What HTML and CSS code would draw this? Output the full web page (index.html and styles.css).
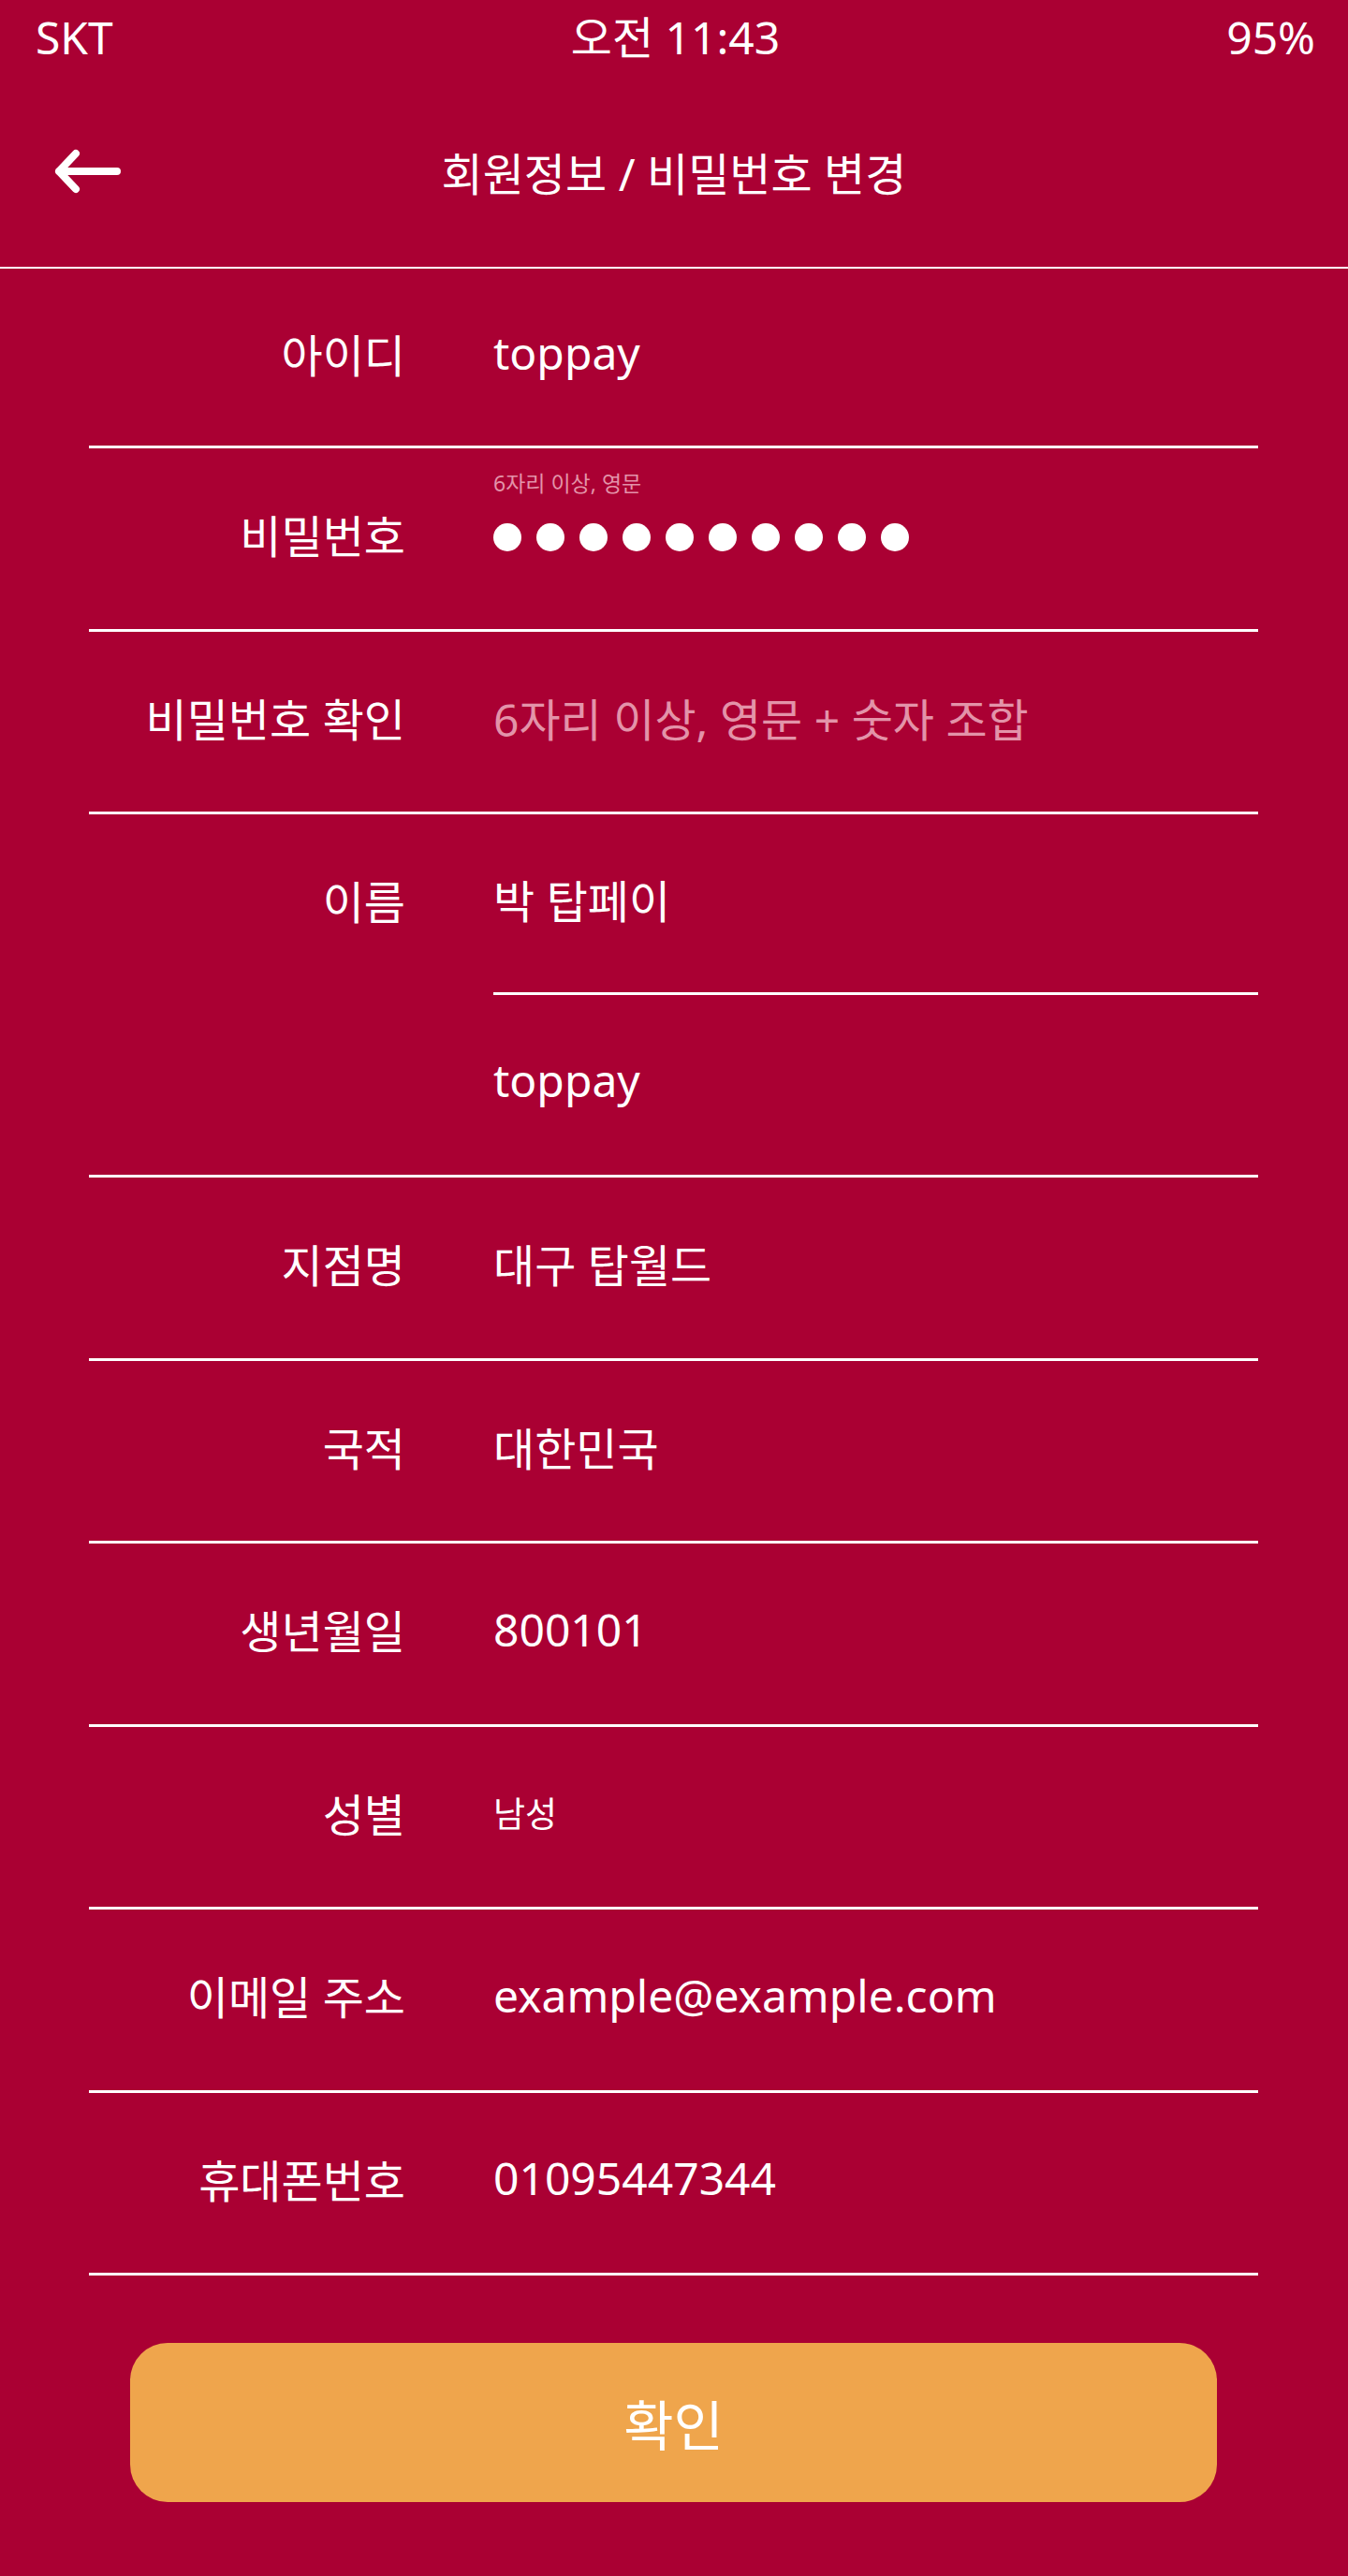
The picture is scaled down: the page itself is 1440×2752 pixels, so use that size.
FILE: index.html
```html
<!DOCTYPE html>
<html lang="ko">
<head>
  <meta charset="UTF-8">
  <title>회원정보 / 비밀번호 변경</title>
  <link rel="stylesheet" href="styles.css">
</head>
<body>
  <div class="status-bar">
    <span>SKT</span>
    <span class="clock">오전 11:43</span>
    <span class="battery">95%</span>
  </div>

  <header class="top-nav">
    <button class="back-btn" title="뒤로">
      <svg width="80" height="52" viewBox="0 0 80 52">
        <path d="M70 26 H8 M26 7 L8 26 L26 45" fill="none" stroke="#fff" stroke-width="8" stroke-linecap="round" stroke-linejoin="round"/>
      </svg>
    </button>
    <h1>회원정보 / 비밀번호 변경</h1>
    <div></div>
  </header>

  <main class="form">
    <div class="field">
      <div class="field-label">아이디</div>
      <div class="field-value">toppay</div>
    </div>

    <div class="field">
      <div class="field-label">비밀번호</div>
      <div class="field-value pw">
        <div class="pw-hint">6자리 이상, 영문</div>
        <div class="dots">
          <i></i><i></i><i></i><i></i><i></i><i></i><i></i><i></i><i></i><i></i>
        </div>
      </div>
    </div>

    <div class="field">
      <div class="field-label">비밀번호 확인</div>
      <div class="field-value placeholder">6자리 이상, 영문 + 숫자 조합</div>
    </div>

    <div class="field">
      <div class="field-label">이름</div>
      <div class="field-stack">
        <div class="field-value sub">박 탑페이</div>
        <div class="field-value">toppay</div>
      </div>
    </div>

    <div class="field">
      <div class="field-label">지점명</div>
      <div class="field-value">대구 탑월드</div>
    </div>

    <div class="field">
      <div class="field-label">국적</div>
      <div class="field-value">대한민국</div>
    </div>

    <div class="field">
      <div class="field-label">생년월일</div>
      <div class="field-value">800101</div>
    </div>

    <div class="field">
      <div class="field-label">성별</div>
      <div class="field-value small">남성</div>
    </div>

    <div class="field">
      <div class="field-label">이메일 주소</div>
      <div class="field-value">example@example.com</div>
    </div>

    <div class="field">
      <div class="field-label">휴대폰번호</div>
      <div class="field-value">01095447344</div>
    </div>
  </main>

  <div class="actions">
    <button class="confirm-btn">확인</button>
  </div>
</body>
</html>
```

FILE: styles.css
```css
body {
  margin: 0;
  font-family: 'Noto Sans', 'Noto Sans CJK KR', sans-serif;
  background: #aa0033;
  color: #fff;
}

.status-bar {
  display: grid;
  grid-template-columns: 1fr auto 1fr;
  align-items: center;
  height: 80px;
  padding: 0 35px 0 38px;
  font-size: 48px;
  line-height: 1;
}

.battery {
  justify-self: end;
}

.top-nav {
  display: grid;
  grid-template-columns: 1fr auto 1fr;
  align-items: center;
  height: 205px;
  border-bottom: 2px solid #fff;
}

.back-btn {
  justify-self: start;
  margin-left: 55px;
  padding: 0;
  border: none;
  background: none;
  cursor: pointer;
  display: flex;
}

.top-nav h1 {
  margin: 0;
  font-size: 48px;
  font-weight: 400;
}

.form {
  padding: 0 96px 0 95px;
}

.field {
  display: grid;
  grid-template-columns: 338px 1fr;
  column-gap: 94px;
  border-bottom: 3px solid #fff;
}

.field-label,
.field-value {
  box-sizing: border-box;
  height: 192.5px;
  padding-bottom: 10px;
  display: flex;
  align-items: center;
  font-size: 48px;
  white-space: nowrap;
}

.field:first-child .field-label,
.field:first-child .field-value {
  height: 189px;
}

.field-label {
  justify-content: flex-end;
}

.field-stack .sub {
  border-bottom: 3px solid #fff;
}

.placeholder {
  color: #e393a9;
}

.small {
  font-size: 37px;
}

.pw {
  flex-direction: column;
  align-items: flex-start;
  justify-content: center;
  padding-bottom: 58px;
}

.pw-hint {
  font-size: 23px;
  line-height: 26px;
  color: #e393a9;
  margin-bottom: 30px;
}

.dots {
  display: flex;
  gap: 16px;
}

.dots i {
  width: 30px;
  height: 30px;
  border-radius: 50%;
  background: #fff;
}

.actions {
  padding: 72px 140px 80px 139px;
}

.confirm-btn {
  display: block;
  width: 100%;
  height: 170px;
  border: none;
  border-radius: 40px;
  background: #efa54c;
  color: #fff;
  font-family: 'Noto Sans', 'Noto Sans CJK KR', sans-serif;
  font-size: 58px;
  cursor: pointer;
}
```
